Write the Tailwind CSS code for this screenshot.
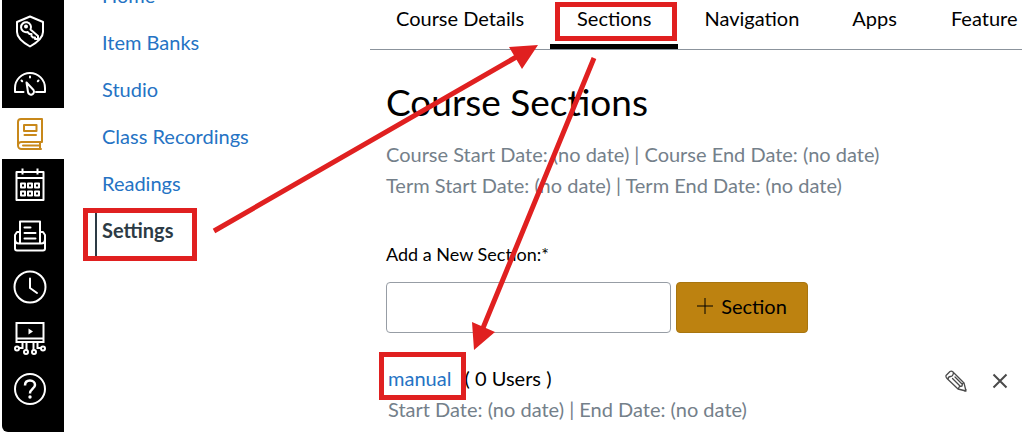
<!DOCTYPE html>
<html lang="en">
<head>
  <meta charset="UTF-8" />
  <meta name="viewport" content="width=device-width,initial-scale=1.0"/>
  <title>Course Sections</title>
  <script src="https://cdn.jsdelivr.net/npm/@tailwindcss/browser@4"></script>
</head>
<body class="bg-white text-black font-['Lato',sans-serif] text-xl overflow-hidden">
  <div class="relative flex h-screen overflow-hidden">

    <!-- Global navigation -->
    <nav aria-label="Global" class="ml-0.5 mb-0.5 w-[62px] shrink-0 bg-black text-white rounded-bl-md pt-1.5">
      <a href="#" aria-label="Admin" class="flex h-[51px] items-center justify-center pr-1.5">
        <svg class="size-9" viewBox="0 0 36 36" fill="none" stroke="currentColor" stroke-width="2" stroke-linejoin="round" stroke-linecap="round">
          <path d="M18 2.500 31 8V18c0 6-6 10.500-13 14.500C11 28.500 5 24 5 18V8Z"/>
          <path d="M18.500 15.500a5 5 0 1 0-3 2.500l2 2h2v2l1.500 1.500h2v1.500h3v-3Z"/>
          <circle cx="14" cy="12.500" r="1"/>
        </svg>
      </a>
      <a href="#" aria-label="Dashboard" class="flex h-[51px] items-center justify-center pr-1.5">
        <svg class="size-9" viewBox="0 0 36 36" fill="none" stroke="currentColor" stroke-width="2" stroke-linejoin="round" stroke-linecap="round">
          <path d="M11.500 27H3v-4a15 15 0 0 1 30 0v4h-9"/>
          <path d="m14.500 17.500 7 7.500a3 3 0 1 1-5.500 2Z"/>
          <path d="M18 11.500v1M9.500 15.500l.7.700M26.500 15.500l-.7.700"/>
        </svg>
      </a>
      <a href="#" aria-label="Courses" class="flex h-[51px] items-center justify-center pr-1.5 bg-white text-[#c8881a]">
        <svg class="size-9" viewBox="0 0 36 36" fill="none" stroke="currentColor" stroke-width="2" stroke-linejoin="round" stroke-linecap="round">
          <path d="M6 29V6a3 3 0 0 1 3-3h21v23H9.500A3.500 3.500 0 0 0 9.500 33H29M28 26v7M11 29.500h17"/>
          <path d="M12 9h12.500v6H12zM12.500 19H24"/>
        </svg>
      </a>
      <a href="#" aria-label="Calendar" class="flex h-[51px] items-center justify-center pr-1.5">
        <svg class="size-9" viewBox="0 0 36 36" fill="none" stroke="currentColor" stroke-width="2" stroke-linejoin="round">
          <path d="M4.500 5h27v28h-27zM4.500 11h27M10.500 1.500v6M25.500 1.500v6"/>
          <path d="M9 16.500h4v4H9zM16 16.500h4v4h-4zM23 16.500h4v4h-4zM9 24.500h4v4H9zM16 24.500h4v4h-4zM23 24.500h4v4h-4z"/>
        </svg>
      </a>
      <a href="#" aria-label="Inbox" class="flex h-[51px] items-center justify-center pr-1.5">
        <svg class="size-9" viewBox="0 0 36 36" fill="none" stroke="currentColor" stroke-width="2" stroke-linejoin="round" stroke-linecap="round">
          <path d="M8 25V3.500h20V25M12.500 9.500h6M12.500 15h11M12.500 20.500h11"/>
          <path d="M8 14H5l-2 3v13.500a2 2 0 0 0 2 2h26a2 2 0 0 0 2-2V17l-2-3h-3M3 21c0 3 1.500 4.500 4 4.500h22c2.500 0 4-1.500 4-4.500"/>
        </svg>
      </a>
      <a href="#" aria-label="History" class="flex h-[51px] items-center justify-center pr-1.5">
        <svg class="size-9" viewBox="0 0 36 36" fill="none" stroke="currentColor" stroke-width="2" stroke-linecap="round" stroke-linejoin="round">
          <circle cx="18" cy="18" r="15.500"/>
          <path d="M18 9.500V19l7 5"/>
        </svg>
      </a>
      <a href="#" aria-label="Studio" class="flex h-[51px] items-center justify-center pr-1.5">
        <svg class="size-9" viewBox="0 0 36 36" fill="none" stroke="currentColor" stroke-width="2">
          <path d="M4.500 3h27v19h-27zM4.500 18.500h27"/>
          <path d="m16.500 8.500 4.500 3-4.500 3z" fill="currentColor" stroke="none"/>
          <path d="M10.500 22v6H7M14.500 22v9M21.500 22v9M25.500 22v6H29"/>
          <g fill="#000"><circle cx="5" cy="28.500" r="2"/><circle cx="14" cy="32" r="2"/><circle cx="22" cy="32" r="2"/><circle cx="31" cy="28.500" r="2"/></g>
        </svg>
      </a>
      <a href="#" aria-label="Help" class="flex h-[51px] items-center justify-center pr-1.5">
        <svg class="size-9" viewBox="0 0 36 36" fill="none" stroke="currentColor" stroke-width="2">
          <circle cx="18" cy="18" r="15"/>
          <path d="M13 14.500c0-3.500 2-5 5-5s5 2 5 4.500c0 3.500-5 4-5 8.500" stroke-width="2.500"/>
          <circle cx="18" cy="26" r="1.700" fill="currentColor" stroke="none"/>
        </svg>
      </a>
    </nav>

    <!-- Course navigation -->
    <nav aria-label="Course" class="-mt-[29px] ml-[31px] w-[275px] shrink-0 text-[#2573c4]">
      <a href="#" class="flex h-[47px] items-center pl-[7px]">Home</a>
      <a href="#" class="flex h-[47px] items-center pl-[7px]">Item Banks</a>
      <a href="#" class="flex h-[47px] items-center pl-[7px]">Studio</a>
      <a href="#" class="flex h-[47px] items-center pl-[7px]">Class Recordings</a>
      <a href="#" class="flex h-[47px] items-center pl-[7px]">Readings</a>
      <a href="#" aria-current="page" class="mt-1.5 flex h-11 items-center border-l-2 border-[#2d3b45] pb-2 pl-[5px] font-bold text-[#2d3b45]">Settings</a>
    </nav>

    <main class="mr-0.5 min-w-0 flex-1">
      <div role="tablist" class="flex h-[50px] overflow-hidden border-b border-[#8b939c] whitespace-nowrap">
        <button role="tab" class="px-[26px] pb-3.5">Course Details</button>
        <button role="tab" aria-selected="true" class="border-b-5 border-black px-[27px] pb-[9px]">Sections</button>
        <button role="tab" class="px-[26px] pb-3.5">Navigation</button>
        <button role="tab" class="px-[27px] pb-3.5">Apps</button>
        <button role="tab" class="px-[27px] pb-3.5">Feature</button>
      </div>

      <div class="pl-4">
        <h1 class="mt-[26px] text-[37px] leading-[52px]">Course Sections</h1>
        <p class="mt-[11px] leading-[31px] text-[#74808a]">Course Start Date: (no date) | Course End Date: (no date)<br>Term Start Date: (no date) | Term End Date: (no date)</p>

        <form class="mt-10">
          <label for="section_name" class="block text-lg leading-[26px]">Add a New Section:*</label>
          <div class="mt-[15px] flex gap-[5px]">
            <input id="section_name" type="text" class="h-[51px] w-[285px] rounded border border-[#979da5] px-3" />
            <button type="button" class="flex h-[51px] w-[132px] items-center justify-center gap-2 rounded border border-[#a8750f] bg-[#bd8210] pb-1">
              <svg class="size-4" viewBox="0 0 16 16" stroke="currentColor"><path d="M8 0v16M0 8h16"/></svg>
              Section
            </button>
          </div>
        </form>

        <div class="mt-[30px] flex justify-between pl-0.5 pr-3.5">
          <div class="leading-[31px]">
            <a href="#" class="mr-2 text-[#2573c4]">manual</a>
            <span>( 0 Users )</span>
            <p class="text-[#74808a]">Start Date: (no date) | End Date: (no date)</p>
          </div>
          <div class="flex h-[31px] items-center gap-6 pt-1 text-[#4a4a4a]">
            <button type="button" aria-label="Edit section">
              <svg class="size-6" viewBox="0 0 24 24" fill="none" stroke="currentColor" stroke-width="1.300" stroke-linejoin="round" stroke-linecap="round">
                <path d="M2 6.500 6 2.500Q7.500 1.500 9 3L20 14l2 8-8-2L3 9.500Q1.500 8 2 6.500ZM4 10.500q0-3 2.500-3T9.500 3.500M14 20l1.500-2.500L18 17l.5-2.500L20 14M8.500 9.500l7 7M11 8l6.500 6.500M20.500 22l1.500-1.500"/>
              </svg>
            </button>
            <button type="button" aria-label="Delete section">
              <svg class="size-4" viewBox="0 0 16 16" stroke="currentColor" stroke-width="2"><path d="m1.500 1.500 13 13M14.500 1.500l-13 13"/></svg>
            </button>
          </div>
        </div>
      </div>
    </main>

    <!-- Walkthrough marks -->
    <svg class="pointer-events-none absolute left-0 top-0 h-[434px] w-[1024px]" viewBox="0 0 1024 434" fill="none" stroke="#e02020" stroke-width="5">
      <rect x="85.500" y="210.500" width="109" height="48"/>
      <rect x="557.500" y="4.500" width="117" height="34"/>
      <rect x="381.500" y="354.500" width="82" height="43"/>
      <path d="M214 231 518 56M594 58 483 328"/>
      <path d="m538 45-29 2 13 22ZM474 350l-2-28 23 10Z" fill="#e02020" stroke="none"/>
    </svg>
  </div>
</body>
</html>
